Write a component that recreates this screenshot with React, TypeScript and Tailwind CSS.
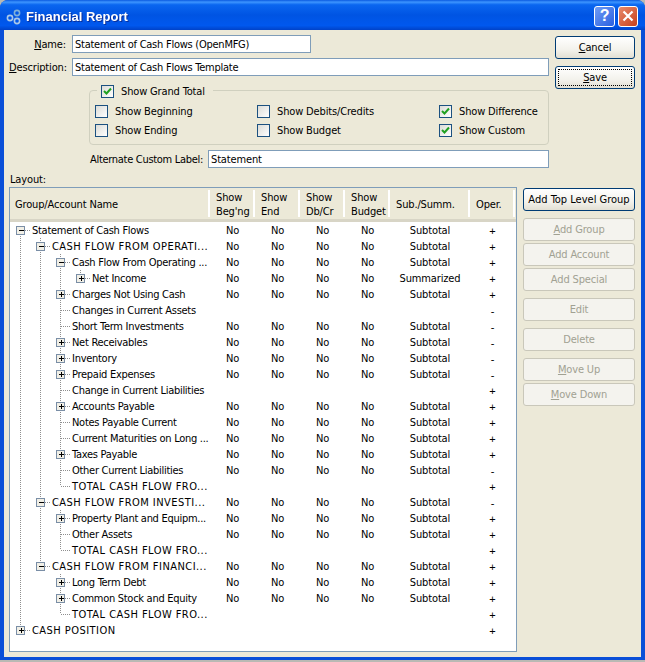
import React from 'react'

type Row = { level: number; kind: 'open' | 'closed' | 'leaf'; name: string; flags: boolean; sub: string; oper: string }

const r = (level: number, kind: Row['kind'], name: string, flags: boolean, sub: string, oper: string): Row => ({ level, kind, name, flags, sub, oper })

const rows: Row[] = [
  r(0, 'open', 'Statement of Cash Flows', true, 'Subtotal', '+'),
  r(1, 'open', 'CASH FLOW FROM OPERATI...', true, 'Subtotal', '+'),
  r(2, 'open', 'Cash Flow From Operating ...', true, 'Subtotal', '+'),
  r(3, 'closed', 'Net Income', true, 'Summarized', '+'),
  r(2, 'closed', 'Charges Not Using Cash', true, 'Subtotal', '+'),
  r(2, 'leaf', 'Changes in Current Assets', false, '', '-'),
  r(2, 'leaf', 'Short Term Investments', true, 'Subtotal', '-'),
  r(2, 'closed', 'Net Receivables', true, 'Subtotal', '-'),
  r(2, 'closed', 'Inventory', true, 'Subtotal', '-'),
  r(2, 'closed', 'Prepaid Expenses', true, 'Subtotal', '-'),
  r(2, 'leaf', 'Change in Current Liabilities', false, '', '+'),
  r(2, 'closed', 'Accounts Payable', true, 'Subtotal', '+'),
  r(2, 'leaf', 'Notes Payable Current', true, 'Subtotal', '+'),
  r(2, 'leaf', 'Current Maturities on Long ...', true, 'Subtotal', '+'),
  r(2, 'closed', 'Taxes Payable', true, 'Subtotal', '+'),
  r(2, 'leaf', 'Other Current Liabilities', true, 'Subtotal', '-'),
  r(2, 'leaf', 'TOTAL CASH FLOW FRO...', false, '', '+'),
  r(1, 'open', 'CASH FLOW FROM INVESTI...', true, 'Subtotal', '-'),
  r(2, 'closed', 'Property Plant and Equipm...', true, 'Subtotal', '+'),
  r(2, 'leaf', 'Other Assets', true, 'Subtotal', '+'),
  r(2, 'leaf', 'TOTAL CASH FLOW FRO...', false, '', '+'),
  r(1, 'open', 'CASH FLOW FROM FINANCI...', true, 'Subtotal', '+'),
  r(2, 'closed', 'Long Term Debt', true, 'Subtotal', '+'),
  r(2, 'closed', 'Common Stock and Equity', true, 'Subtotal', '+'),
  r(2, 'leaf', 'TOTAL CASH FLOW FRO...', false, '', '+'),
  r(0, 'closed', 'CASH POSITION', false, '', '+'),
]

// does a later sibling exist at this level, before the tree drops below it
function hasNext(i: number, level: number) {
  for (let j = i + 1; j < rows.length; j++) {
    if (rows[j].level < level) return false
    if (rows[j].level === level) return true
  }
  return false
}

function Branches({ index, row }: { index: number; row: Row }) {
  const w = 21 + row.level * 20
  const cx = 10.5 + row.level * 20
  const dot = { stroke: '#8f8f8f', strokeWidth: 1, strokeDasharray: '1 1', shapeRendering: 'crispEdges' as const }
  const through: number[] = []
  let cursor = index
  for (let l = row.level - 1; l >= 0; l--) {
    while (rows[cursor].level > l) cursor--
    if (hasNext(cursor, l)) through.push(l)
  }
  const first = index === 0
  const next = hasNext(index, row.level)
  return (
    <svg width={w} height={16} className="shrink-0 mr-[1px]">
      {through.map((l) => (
        <line key={l} x1={10.5 + l * 20} x2={10.5 + l * 20} y1={0} y2={16} {...dot} />
      ))}
      {!first && <line x1={cx} x2={cx} y1={0} y2={8} {...dot} />}
      {next && <line x1={cx} x2={cx} y1={8} y2={16} {...dot} />}
      <line x1={cx} x2={cx + 10} y1={8.5} y2={8.5} {...dot} />
      {row.kind !== 'leaf' && (
        <>
          <rect x={cx - 4} y={4.5} width={8} height={8} fill="#f1efe6" stroke="#7a8ea6" shapeRendering="crispEdges" />
          <line x1={cx - 2} x2={cx + 3} y1={8.5} y2={8.5} stroke="#000" shapeRendering="crispEdges" />
          {row.kind === 'closed' && <line x1={cx + 0.5} x2={cx + 0.5} y1={6} y2={11} stroke="#000" shapeRendering="crispEdges" />}
        </>
      )}
    </svg>
  )
}

function Check({ on }: { on?: boolean }) {
  return (
    <span className="w-[13px] h-[13px] shrink-0 border border-[#1c5180] bg-[linear-gradient(135deg,#dcdcd7,#ffffff)] flex items-center justify-center">
      {on && (
        <svg width="9" height="9" viewBox="0 0 9 9">
          <path d="M1 4l2.5 2.5L8 1.5" fill="none" stroke="#21a121" strokeWidth="2" />
        </svg>
      )}
    </span>
  )
}

function CheckLabel({ label, on, className }: { label: string; on?: boolean; className?: string }) {
  return (
    <div className={`flex items-center gap-[7px] h-[19px] whitespace-nowrap ${className ?? ''}`}>
      <Check on={on} />
      <span>{label}</span>
    </div>
  )
}

function Btn({ children, disabled, focus, className }: { children: React.ReactNode; disabled?: boolean; focus?: boolean; className?: string }) {
  const look = disabled
    ? 'border-[#c9c7ba] bg-[#f4f3ee] text-[#a1a192]'
    : 'border-[#003c74] bg-[linear-gradient(180deg,#ffffff,#f3f2ec_60%,#e2dfd3)] text-black'
  return (
    <div className={`h-[23px] shrink-0 rounded-[3px] border flex items-center justify-center whitespace-nowrap ${look} ${className ?? 'w-[112px]'}`}>
      {focus ? (
        <span className="w-[74px] h-[17px] border border-dotted border-black flex items-center justify-center">{children}</span>
      ) : (
        children
      )}
    </div>
  )
}

const cols = [
  { a: 'Show', b: "Beg'ng" },
  { a: 'Show', b: 'End' },
  { a: 'Show', b: 'Db/Cr' },
  { a: 'Show', b: 'Budget' },
]

export default function App() {
  return (
    <div className="w-[645px] h-[662px] bg-[#b9b9b4] font-['DejaVu_Sans_Condensed','DejaVu_Sans',sans-serif] text-[11px] tracking-[-0.15px] leading-[16px] text-black overflow-hidden">
      <div className="h-[660px] rounded-t-[8px] bg-[#0a4fd8] flex flex-col overflow-hidden">
        <div className="h-[30px] shrink-0 flex items-center pl-[6px] pr-[7px] pt-[3px] bg-[linear-gradient(180deg,#0a5ae0_0%,#3d95ff_7%,#0a66f0_16%,#0054e3_50%,#0058ee_85%,#0042c8_100%)]">
          <svg width="16" height="16" viewBox="0 0 16 16" className="shrink-0">
            <circle cx="4" cy="9" r="2.6" fill="none" stroke="#a9c8e8" strokeWidth="1.6" />
            <circle cx="11" cy="4" r="2.6" fill="none" stroke="#7fb0d8" strokeWidth="1.6" />
            <circle cx="11" cy="12" r="2.6" fill="none" stroke="#a9c8e8" strokeWidth="1.6" />
          </svg>
          <span className="ml-[4px] text-white font-bold font-['Liberation_Sans',sans-serif] tracking-normal text-[13px] drop-shadow-[1px_1px_0_#0a2f9a]">Financial Report</span>
          <div className="ml-auto flex gap-[3px] -mt-[1px]">
            <div className="w-[21px] h-[21px] rounded-[3px] border border-white bg-[linear-gradient(135deg,#6f9cf5,#2a5fe0)] flex items-center justify-center text-white font-bold font-['Liberation_Sans',sans-serif] text-[16px]">?</div>
            <div className="w-[20px] h-[21px] rounded-[3px] border border-white bg-[linear-gradient(135deg,#e88a6c,#c8401c)] flex items-center justify-center">
              <svg width="12" height="12" viewBox="0 0 12 12">
                <path d="M1.5 1.5l9 9M10.5 1.5l-9 9" stroke="#fff" strokeWidth="2.2" />
              </svg>
            </div>
          </div>
        </div>

        <div className="mx-[4px] h-[627px] bg-[#ece9d8] pl-[5px] pr-[6px] flex flex-col">
          <div className="flex mt-[5px]">
            <div className="w-[540px] shrink-0">
              <div className="flex items-center h-[18px]">
                <div className="w-[57px] text-right pt-[2px]"><u>N</u>ame:</div>
                <div className="ml-[6px] w-[239px] h-[18px] border border-[#7f9db9] bg-white px-[2px] pt-[2px] tracking-[-0.25px] flex items-center">Statement of Cash Flows (OpenMFG)</div>
              </div>
              <div className="flex items-center h-[18px] mt-[5px]">
                <div className="w-[57px] text-right pt-[2px]"><u>D</u>escription:</div>
                <div className="ml-[6px] w-[477px] h-[18px] border border-[#7f9db9] bg-white px-[2px] pt-[2px] tracking-[-0.25px] flex items-center">Statement of Cash Flows Template</div>
              </div>
              <div className="relative ml-[80px] mt-[14px] h-[55px] w-[460px] rounded-[4px] border border-[#d0d0bf] pl-[5px] pt-[11px]">
                <div className="absolute left-[7px] -top-[9px] pl-[4px] pr-[8px] bg-[#ece9d8]">
                  <CheckLabel label="Show Grand Total" on />
                </div>
                <div className="grid grid-cols-[162px_182px_1fr]">
                  <CheckLabel label="Show Beginning" />
                  <CheckLabel label="Show Debits/Credits" />
                  <CheckLabel label="Show Difference" on />
                  <CheckLabel label="Show Ending" />
                  <CheckLabel label="Show Budget" />
                  <CheckLabel label="Show Custom" on />
                </div>
              </div>
              <div className="flex items-center h-[18px] mt-[5px] ml-[81px]">
                <span className="w-[118px] whitespace-nowrap pt-[2px] tracking-[-0.3px]">Alternate Custom Label:</span>
                <div className="w-[341px] h-[18px] border border-[#7f9db9] bg-white px-[2px] pt-[2px] flex items-center">Statement</div>
              </div>
            </div>
            <div className="ml-[6px] flex flex-col gap-[7px] mt-[1px]">
              <Btn className="w-[80px]"><span><u>C</u>ancel</span></Btn>
              <Btn focus className="w-[80px]"><span><u>S</u>ave</span></Btn>
            </div>
          </div>

          <div className="ml-[1px] mt-[4px] h-[15px]">Layout:</div>

          <div className="flex">
            <div className="w-[508px] h-[465px] shrink-0 border border-[#7f9db9] bg-white flex flex-col overflow-hidden">
              <div className="h-[34px] shrink-0 bg-[#ece9d8] border-b-[3px] border-[#d8d5c6] flex items-center">
                <div className="w-[200px] h-[27px] flex items-center pl-[5px] pt-[2px] border-r-2 border-white">Group/Account Name</div>
                {cols.map((c) => (
                  <div key={c.b} className="w-[45px] h-[27px] flex flex-col justify-center pl-[6px] pt-[2px] leading-[14px] border-r-2 border-white">
                    <span>{c.a}</span>
                    <span>{c.b}</span>
                  </div>
                ))}
                <div className="w-[80px] h-[27px] flex items-center pl-[6px] pt-[2px] border-r-2 border-white">Sub./Summ.</div>
                <div className="w-[45px] h-[27px] flex items-center pl-[6px] pt-[2px] border-r-2 border-white">Oper.</div>
              </div>
              {rows.map((row, i) => (
                <div key={i} className="flex h-[16px] shrink-0 items-start">
                  <div className="w-[200px] flex items-start whitespace-nowrap overflow-hidden">
                    <Branches index={i} row={row} />
                    <span className={`pt-[1px] ${row.name === row.name.toUpperCase() ? 'tracking-[0.45px]' : 'tracking-[-0.28px]'}`}>{row.name}</span>
                  </div>
                  {[0, 1, 2, 3].map((c) => (
                    <div key={c} className="w-[45px] pt-[1px] text-center">{row.flags ? 'No' : ''}</div>
                  ))}
                  <div className="w-[80px] pt-[1px] text-center">{row.sub}</div>
                  <div className="w-[45px] pt-[1px] text-center font-['Liberation_Sans',sans-serif]">{row.oper}</div>
                </div>
              ))}
            </div>
            <div className="ml-[6px] flex flex-col mt-[1px]">
              <Btn className="w-[112px] tracking-normal">Add Top Level Group</Btn>
              <Btn disabled className="w-[112px] mt-[7px]"><span><u>A</u>dd Group</span></Btn>
              <Btn disabled className="w-[112px] mt-[2px]">Add Account</Btn>
              <Btn disabled className="w-[112px] mt-[2px]">Add Special</Btn>
              <Btn disabled className="w-[112px] mt-[7px]">Edit</Btn>
              <Btn disabled className="w-[112px] mt-[7px]">Delete</Btn>
              <Btn disabled className="w-[112px] mt-[7px]"><span><u>M</u>ove Up</span></Btn>
              <Btn disabled className="w-[112px] mt-[2px]"><span><u>M</u>ove Down</span></Btn>
            </div>
          </div>
        </div>
      </div>
    </div>
  )
}
